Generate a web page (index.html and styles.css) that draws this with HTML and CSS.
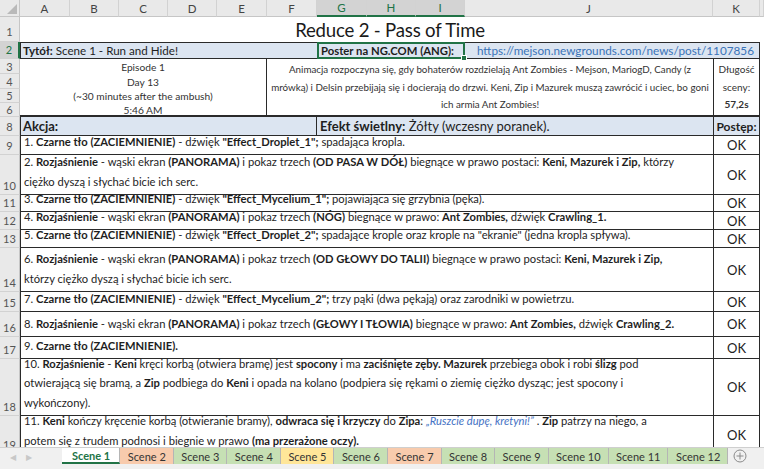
FILE: index.html
```html
<!DOCTYPE html>
<html lang="pl">
<head>
<meta charset="utf-8">
<title>Reduce 2 - Pass of Time</title>
<link rel="stylesheet" href="styles.css">
</head>
<body>
<div class="app">
  <div class="sheet">
    <div class="corner"><span class="tri"></span></div>
    <div class="ch">A</div><div class="ch">B</div><div class="ch">C</div><div class="ch">D</div><div class="ch">E</div><div class="ch">F</div>
    <div class="ch sel">G</div><div class="ch sel">H</div><div class="ch sel">I</div><div class="ch">J</div><div class="ch">K</div><div class="ch"></div>

    <div class="rh r1">1</div>
    <div class="title"><span>Reduce 2 - Pass of Time</span></div>

    <div class="rh selr">2</div>
    <div class="c-tytul"><span><b>Tytół:</b> Scene 1 - Run and Hide!</span></div>
    <div class="c-poster"><span><b>Poster na NG.COM (ANG):</b></span><span class="handle"></span></div>
    <div class="c-link"><span class="link">https://mejson.newgrounds.com/news/post/1107856</span></div>

    <div class="rh r3">3</div><div class="rh r4">4</div><div class="rh r5">5</div><div class="rh r6">6</div>
    <div class="c-episode">
      <div class="ep">Episode 1</div>
      <div class="ep">Day 13</div>
      <div class="ep">(~30 minutes after the ambush)</div>
      <div class="ep">5:46 AM</div>
    </div>
    <div class="c-desc"><span>Animacja rozpoczyna się, gdy bohaterów rozdzielają Ant Zombies - Mejson, MariogD, Candy (z<br>mrówką) i Delsin przebijają się i docierają do drzwi. Keni, Zip i Mazurek muszą zawrócić i uciec, bo goni<br>ich armia Ant Zombies!</span></div>
    <div class="c-len"><span>Długość<br>sceny:<br><b>57,2s</b></span></div>

    <div class="rh">8</div>
    <div class="c-head-a"><span><b>Akcja:</b></span></div>
    <div class="c-head-g"><span><b>Efekt świetlny:</b> Żółty (wczesny poranek).</span></div>
    <div class="c-head-k"><span><b>Postęp:</b></span></div>

    <div class="rh">9</div>
    <div class="act"><span>1. <b>Czarne tło (ZACIEMNIENIE)</b> - dźwięk <b>"Effect_Droplet_1";</b> spadająca kropla.</span></div>
    <div class="ok">OK</div>

    <div class="rh">10</div>
    <div class="act"><span>2. <b>Rozjaśnienie</b> - wąski ekran <b>(PANORAMA)</b> i pokaz trzech <b>(OD PASA W DÓŁ)</b> biegnące w prawo postaci: <b>Keni, Mazurek i Zip,</b> którzy<br>ciężko dyszą i słychać bicie ich serc.</span></div>
    <div class="ok">OK</div>

    <div class="rh">11</div>
    <div class="act"><span>3. <b>Czarne tło (ZACIEMNIENIE)</b> - dźwięk <b>"Effect_Mycelium_1";</b> pojawiająca się grzybnia (pęka).</span></div>
    <div class="ok">OK</div>

    <div class="rh">12</div>
    <div class="act"><span>4. <b>Rozjaśnienie</b> - wąski ekran <b>(PANORAMA)</b> i pokaz trzech <b>(NÓG)</b> biegnące w prawo: <b>Ant Zombies,</b> dźwięk <b>Crawling_1.</b></span></div>
    <div class="ok">OK</div>

    <div class="rh">13</div>
    <div class="act"><span>5. <b>Czarne tło (ZACIEMNIENIE)</b> - dźwięk <b>"Effect_Droplet_2";</b> spadające krople oraz krople na "ekranie" (jedna kropla spływa).</span></div>
    <div class="ok">OK</div>

    <div class="rh">14</div>
    <div class="act"><span>6. <b>Rozjaśnienie</b> - wąski ekran <b>(PANORAMA)</b> i pokaz trzech <b>(OD GŁOWY DO TALII)</b> biegnące w prawo postaci: <b>Keni, Mazurek i Zip,</b><br>którzy ciężko dyszą i słychać bicie ich serc.</span></div>
    <div class="ok">OK</div>

    <div class="rh">15</div>
    <div class="act"><span>7. <b>Czarne tło (ZACIEMNIENIE)</b> - dźwięk <b>"Effect_Mycelium_2";</b> trzy pąki (dwa pękają) oraz zarodniki w powietrzu.</span></div>
    <div class="ok">OK</div>

    <div class="rh">16</div>
    <div class="act"><span>8. <b>Rozjaśnienie</b> - wąski ekran <b>(PANORAMA)</b> i pokaz trzech <b>(GŁOWY I TŁOWIA)</b> biegnące w prawo: <b>Ant Zombies,</b> dźwięk <b>Crawling_2.</b></span></div>
    <div class="ok">OK</div>

    <div class="rh">17</div>
    <div class="act"><span>9. <b>Czarne tło (ZACIEMNIENIE).</b></span></div>
    <div class="ok">OK</div>

    <div class="rh">18</div>
    <div class="act"><span>10. <b>Rozjaśnienie</b> - <b>Keni</b> kręci korbą (otwiera bramę) jest <b>spocony</b> i ma <b>zaciśnięte zęby. Mazurek</b> przebiega obok i robi <b>ślizg</b> pod<br>otwierającą się bramą, a <b>Zip</b> podbiega do <b>Keni</b> i opada na kolano (podpiera się rękami o ziemię ciężko dysząc; jest spocony i<br>wykończony).</span></div>
    <div class="ok">OK</div>

    <div class="rh">19</div>
    <div class="act"><span>11. <b>Keni</b> kończy kręcenie korbą (otwieranie bramy), <b>odwraca się i krzyczy</b> do <b>Zipa</b>: <i class="quote">„Ruszcie dupę, kretyni!”</i> . <b>Zip</b> patrzy na niego, a<br>potem się z trudem podnosi i biegnie w prawo <b>(ma przerażone oczy).</b></span></div>
    <div class="ok">OK</div>
  </div>

  <div class="tabbar">
    <div class="nav"><span class="arr">&#9664;</span><span class="arr">&#9654;</span></div>
    <div class="tabs">
      <div class="tab active">Scene 1</div>
      <div class="tab peach">Scene 2</div>
      <div class="tab green">Scene 3</div>
      <div class="tab green">Scene 4</div>
      <div class="tab yellow">Scene 5</div>
      <div class="tab green">Scene 6</div>
      <div class="tab peach">Scene 7</div>
      <div class="tab green">Scene 8</div>
      <div class="tab green">Scene 9</div>
      <div class="tab green">Scene 10</div>
      <div class="tab green">Scene 11</div>
      <div class="tab green">Scene 12</div>
    </div>
    <div class="add">
      <svg width="14" height="14" viewBox="0 0 14 14"><circle cx="7" cy="7" r="6" fill="none" stroke="#8a8a8a" stroke-width="1"/><path d="M7 3.5v7M3.5 7h7" stroke="#8a8a8a" stroke-width="1"/></svg>
    </div>
  </div>
</div>
</body>
</html>
```

FILE: styles.css
```css
* { box-sizing: border-box; }
html, body { margin: 0; padding: 0; background: #fff; }
body {
  width: 764px;
  height: 469px;
  overflow: hidden;
  font-family: Lato, "Open Sans", sans-serif;
  color: #1e1e1e;
}
b { font-weight: 700; }

.app { width: 764px; height: 469px; display: flex; flex-direction: column; }

.sheet {
  height: 447px;
  flex-shrink: 0;
  overflow: hidden;
  display: grid;
  grid-template-columns: 20px 50px 49px 49px 49px 50px 50px 50px 49px 49px 248px 47px 4px;
  grid-template-rows: 17px 25px 17px 15px 15px 14px 14px 19px 19px 40px 17px 18px 18px 44px 20px 25px 22px 57px 38px;
  font-size: 11.2px;
}

/* column headers */
.corner {
  background: #e9e9e9;
  border-right: 1px solid #c6c6c6;
  border-bottom: 1px solid #c6c6c6;
  position: relative;
}
.tri {
  position: absolute; right: 2px; bottom: 2px;
  width: 0; height: 0;
  border-left: 10px solid transparent;
  border-bottom: 10px solid #b9b9b9;
}
.ch {
  background: #e9e9e9;
  color: #444;
  font-size: 11.5px;
  display: flex; align-items: center; justify-content: center;
  border-right: 1px solid #d2d2d2;
  border-bottom: 1px solid #c6c6c6;
}
.ch.sel {
  background: #d3d3d3;
  color: #217346;
  border-bottom: 2px solid #217346;
}

/* row headers */
.rh {
  grid-column: 1;
  background: #e9e9e9;
  color: #555;
  font-size: 11px;
  display: flex; align-items: flex-end; justify-content: center;
  padding-bottom: 2px;
  border-right: 1px solid #c6c6c6;
  border-bottom: 1px solid #d2d2d2;
  line-height: 13px;
}
.rh.r1 { align-items: center; padding-top: 6px; }
.rh.selr {
  background: #d3d3d3;
  color: #217346;
  border-right: 2px solid #217346;
  align-items: center;
}
.rh.r3, .rh.r4, .rh.r5, .rh.r6 { align-items: center; padding-bottom: 0; }

.title {
  grid-column: 2 / 13;
  display: flex; align-items: flex-end; justify-content: center;
  font-size: 18.6px;
  letter-spacing: -0.2px;
  padding-bottom: 1px;
  color: #1a1a1a;
}

.c-tytul {
  grid-column: 2 / 8;
  background: #dce5f1;
  border: 1px solid #2a2a2a;
  border-right: none;
  display: flex; align-items: center;
  padding-left: 2px;
  white-space: nowrap;
  font-size: 11.6px;
}
.c-poster {
  grid-column: 8 / 11;
  background: #dce5f1;
  border: 2px solid #217346;
  display: flex; align-items: center;
  padding-left: 2px;
  white-space: nowrap;
  position: relative;
  font-size: 11.3px;
}
.handle {
  position: absolute; right: -4px; bottom: -4px;
  width: 6px; height: 6px;
  background: #217346;
  border: 1px solid #fff;
}
.c-link {
  grid-column: 11 / 13;
  background: #dce5f1;
  border: 1px solid #2a2a2a;
  border-left: none;
  display: flex; align-items: center; justify-content: flex-end;
  padding-right: 5px;
  white-space: nowrap;
}
.link { color: #3a73b8; font-size: 11.75px; }

.c-episode {
  grid-column: 2 / 7;
  grid-row: 4 / 8;
  border-right: 1px solid #2a2a2a;
  border-bottom: 2px solid #2a2a2a;
  display: grid;
  grid-template-rows: 15px 15px 14px 14px;
  font-size: 10.2px;
  color: #333;
  text-align: center;
}
.ep { display: flex; align-items: center; justify-content: center; }
.c-desc {
  grid-column: 7 / 12;
  grid-row: 4 / 8;
  border-bottom: 2px solid #2a2a2a;
  display: flex; align-items: center; justify-content: center;
  text-align: center;
  font-size: 9.8px;
  line-height: 17.5px;
  color: #333;
  white-space: nowrap;
  padding-top: 1px;
}
.c-len {
  grid-column: 12 / 13;
  grid-row: 4 / 8;
  border-left: 1px solid #2a2a2a;
  border-right: 1px solid #2a2a2a;
  border-bottom: 2px solid #2a2a2a;
  display: flex; align-items: center; justify-content: center;
  text-align: center;
  font-size: 10px;
  line-height: 17.5px;
  color: #333;
  padding-top: 1px;
}

.c-head-a {
  grid-column: 2 / 8;
  background: #dce5f1;
  border-left: 1px solid #2a2a2a;
  border-bottom: 1px solid #2a2a2a;
  border-right: 1px solid #2a2a2a;
  display: flex; align-items: center;
  padding-left: 2px;
  font-size: 13px;
}
.c-head-g {
  grid-column: 8 / 12;
  background: #dce5f1;
  border-bottom: 1px solid #2a2a2a;
  display: flex; align-items: center;
  padding-left: 3px;
  font-size: 13px;
  white-space: nowrap;
}
.c-head-k {
  grid-column: 12 / 13;
  background: #dce5f1;
  border-left: 1px solid #2a2a2a;
  border-right: 1px solid #2a2a2a;
  border-bottom: 1px solid #2a2a2a;
  display: flex; align-items: center; justify-content: center;
  font-size: 12px;
}

.act {
  grid-column: 2 / 12;
  border-left: 1px solid #2a2a2a;
  border-bottom: 1px solid #2a2a2a;
  display: flex; align-items: flex-end;
  padding: 0 0 3px 3px;
  white-space: nowrap;
  line-height: 19.5px;
}
.ok {
  grid-column: 12 / 13;
  border-left: 1px solid #2a2a2a;
  border-right: 1px solid #2a2a2a;
  border-bottom: 1px solid #2a2a2a;
  display: flex; align-items: center; justify-content: center;
  font-size: 13px;
  color: #222;
}
.quote { color: #4472c4; font-style: italic; }

/* tab bar */
.tabbar {
  flex: 1;
  background: #f0f0f0;
  border-top: 1px solid #cfcfcf;
  display: flex;
  align-items: flex-start;
  font-size: 11px;
}
.nav {
  width: 62px;
  flex-shrink: 0;
  display: flex; gap: 10px;
  padding: 4px 0 0 10px;
  color: #c8c8c8;
  font-size: 8px;
}
.tabs { display: flex; height: 16px; flex-shrink: 0; }
.tab {
  padding: 0 7px 0 7.5px;
  height: 16px;
  display: flex; align-items: center;
  color: #333;
  border-right: 1px solid #b5b5b5;
  white-space: nowrap;
}
.tab.active {
  background: #fff;
  color: #217346;
  font-weight: 700;
  border-bottom: 2px solid #217346;
  padding: 0 9px 0 10px;
}
.tab.peach { background: #f8cbad; }
.tab.green { background: #c6e0b4; }
.tab.yellow { background: #ffe699; }
.add {
  display: flex;
  padding: 1px 0 0 5px;
}
```
